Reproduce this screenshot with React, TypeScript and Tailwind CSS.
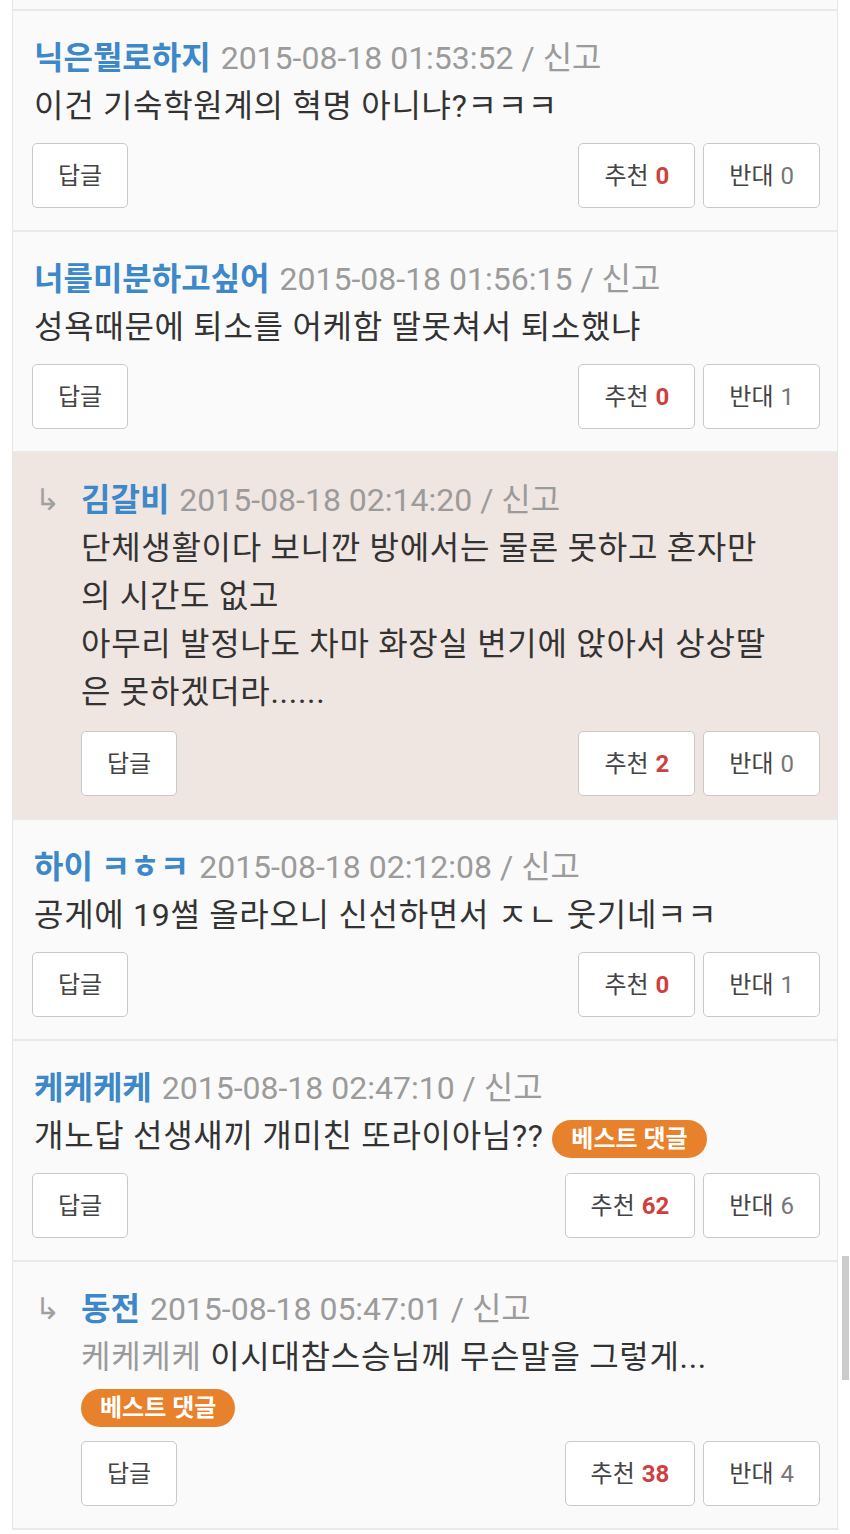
import React from 'react';

type Comment = {
  name: string;
  date: string;
  body: React.ReactNode;
  up: number;
  down: number;
  reply?: boolean;
  highlight?: boolean;
  badge?: 'inline' | 'block';
};

const comments: Comment[] = [
  {
    name: '닉은뭘로하지',
    date: '2015-08-18 01:53:52',
    body: '이건 기숙학원계의 혁명 아니냐?ㅋㅋㅋ',
    up: 0,
    down: 0,
  },
  {
    name: '너를미분하고싶어',
    date: '2015-08-18 01:56:15',
    body: '성욕때문에 퇴소를 어케함 딸못쳐서 퇴소했냐',
    up: 0,
    down: 1,
  },
  {
    name: '김갈비',
    date: '2015-08-18 02:14:20',
    body: (
      <>
        단체생활이다 보니깐 방에서는 물론 못하고 혼자만
        <br />
        의 시간도 없고
        <br />
        아무리 발정나도 차마 화장실 변기에 앉아서 상상딸
        <br />은 못하겠더라......
      </>
    ),
    up: 2,
    down: 0,
    reply: true,
    highlight: true,
  },
  {
    name: '하이 ㅋㅎㅋ',
    date: '2015-08-18 02:12:08',
    body: '공게에 19썰 올라오니 신선하면서 ㅈㄴ 웃기네ㅋㅋ',
    up: 0,
    down: 1,
  },
  {
    name: '케케케케',
    date: '2015-08-18 02:47:10',
    body: '개노답 선생새끼 개미친 또라이아님??',
    up: 62,
    down: 6,
    badge: 'inline',
  },
  {
    name: '동전',
    date: '2015-08-18 05:47:01',
    body: (
      <>
        <span className="text-[#9a9a9a]">케케케케</span> 이시대참스승님께 무슨말을 그렇게...
      </>
    ),
    up: 38,
    down: 4,
    reply: true,
    badge: 'block',
  },
];

function Badge() {
  return (
    <span className="inline-flex h-[38px] items-center rounded-full bg-[#e8812b] px-[19px] align-middle text-[24px] font-bold leading-none tracking-normal text-white">
      베스트 댓글
    </span>
  );
}

function Btn({ children }: { children: React.ReactNode }) {
  return (
    <button className="flex h-[65px] items-center justify-center gap-[7px] rounded-[5px] border border-[#c9c9c9] bg-white px-[25px] text-[24px] leading-none text-[#444]">
      {children}
    </button>
  );
}

function CommentRow({ c }: { c: Comment }) {
  return (
    <div
      className={`flex border-b-2 border-[#e9e9e9] pt-[23px] pb-[22px] pr-[17px] ${
        c.highlight ? 'bg-[#f0e6e1]' : 'bg-[#fafafa]'
      } ${c.reply ? 'pl-[22px]' : 'pl-[19px]'}`}
    >
      {c.reply && (
        <div className="w-[46px] shrink-0 text-[30px] leading-[48px] text-[#a0a0a0]">↳</div>
      )}
      <div className="min-w-0 flex-1">
        <div className={`text-[32px] leading-[48px] whitespace-nowrap ${c.reply ? '' : 'pl-[2px]'}`}>
          <span className="mr-[10px] font-bold text-[#3d88c8]">{c.name}</span>
          <span className="text-[#9b9b9b]">{c.date} / 신고</span>
        </div>
        <div
          className={`text-[32px] leading-[48px] tracking-[0.7px] text-[#333] ${
            c.reply ? '' : 'pl-[2px]'
          }`}
        >
          {c.body}
          {c.badge === 'inline' && (
            <>
              {' '}
              <Badge />
            </>
          )}
        </div>
        {c.badge === 'block' && (
          <div className="mt-[8px] flex">
            <Badge />
          </div>
        )}
        <div
          className={`flex items-center justify-between ${
            c.badge === 'block' ? 'mt-[14px]' : c.reply ? 'mt-[15px]' : 'mt-[13px]'
          }`}
        >
          <Btn>답글</Btn>
          <div className="flex gap-[8px]">
            <Btn>
              <span>추천</span>
              <span className="font-bold text-[#cf3f3f]">{c.up}</span>
            </Btn>
            <Btn>
              <span>반대</span>
              <span className="text-[#777]">{c.down}</span>
            </Btn>
          </div>
        </div>
      </div>
    </div>
  );
}

export default function App() {
  return (
    <div
      className="relative min-h-[1534px] overflow-hidden bg-white"
      style={{ fontFamily: "Roboto, 'Noto Sans CJK KR', sans-serif" }}
    >
      <div className="mx-[12px] border-x border-[#e6e6e6]">
        <div className="h-[11px] border-b-2 border-[#e9e9e9] bg-[#fafafa]" />
        {comments.map((c, i) => (
          <CommentRow key={i} c={c} />
        ))}
      </div>
      {/* scrollbar thumb */}
      <div className="absolute right-[1px] top-[1256px] h-[124px] w-[7px] bg-[#cbcbcb]" />
    </div>
  );
}
